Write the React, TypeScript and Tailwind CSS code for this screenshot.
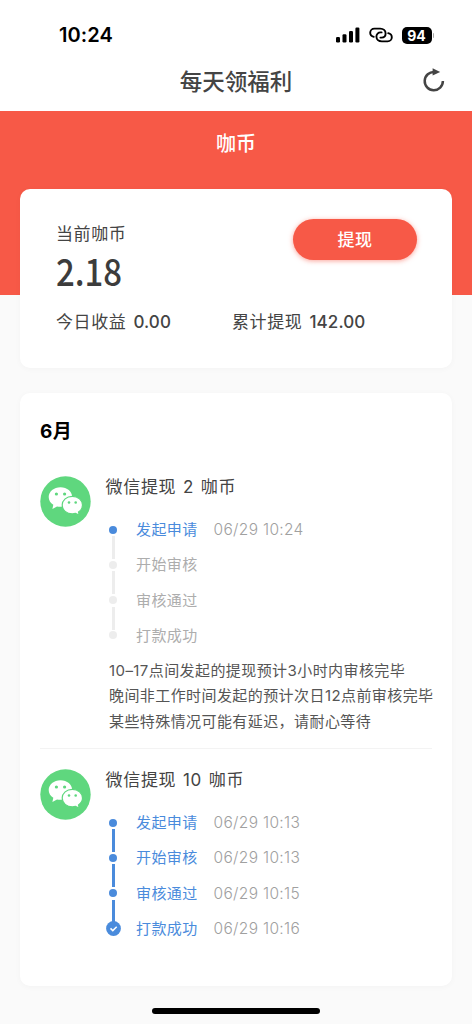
import React from "react";
import { clsx } from "clsx";

type Step = {
  label: string;
  time?: string;
  state: "todo" | "active" | "finished";
};

type WithdrawRecord = {
  title: string;
  steps: Step[];
  notes?: string[];
};

const records: WithdrawRecord[] = [
  {
    title: "微信提现 2 咖币",
    steps: [
      { label: "发起申请", time: "06/29 10:24", state: "active" },
      { label: "开始审核", state: "todo" },
      { label: "审核通过", state: "todo" },
      { label: "打款成功", state: "todo" },
    ],
    notes: [
      "10–17点间发起的提现预计3小时内审核完毕",
      "晚间非工作时间发起的预计次日12点前审核完毕",
      "某些特殊情况可能有延迟，请耐心等待",
    ],
  },
  {
    title: "微信提现 10 咖币",
    steps: [
      { label: "发起申请", time: "06/29 10:13", state: "active" },
      { label: "开始审核", time: "06/29 10:13", state: "active" },
      { label: "审核通过", time: "06/29 10:15", state: "active" },
      { label: "打款成功", time: "06/29 10:16", state: "finished" },
    ],
  },
];

function SignalIcon() {
  return (
    <svg width="24" height="16" viewBox="0 0 24 16" fill="#000">
      <rect x="0" y="10" width="4" height="5.5" rx="1.2" />
      <rect x="6.5" y="7.3" width="4" height="8.2" rx="1.2" />
      <rect x="13" y="4" width="4" height="11.5" rx="1.2" />
      <rect x="19.4" y="0.5" width="4" height="15" rx="1.2" />
    </svg>
  );
}

function LinkIcon() {
  return (
    <svg width="24" height="16" viewBox="0 0 24 16" fill="none" stroke="#000" strokeWidth="1.9" strokeLinecap="round">
      <path d="M4.8 9.9C2.6 9.4 1.2 7.8 1.2 5.8C1.2 3.4 3 1.6 5.4 1.6H11.2C14.4 1.6 16.6 3.6 16.6 6.4C16.6 8.9 14.8 10.6 12.4 10.6H11.4" />
      <path d="M19.2 6.1C21.4 6.6 22.8 8.2 22.8 10.2C22.8 12.6 21 14.4 18.6 14.4H12.8C9.6 14.4 7.4 12.4 7.4 9.6C7.4 7.1 9.2 5.4 11.6 5.4H12.6" />
    </svg>
  );
}

function RefreshIcon() {
  return (
    <svg width="22" height="24" viewBox="0 0 22 24">
      <path d="M11.5 4A9.1 9.1 0 1 0 19.9 13" fill="none" stroke="#444" strokeWidth="2.5" />
      <path d="M9.6 0.2L17.2 4L9.6 7.4Z" fill="#444" />
    </svg>
  );
}

function WechatIcon() {
  return (
    <svg className="shrink-0" width="51" height="51" viewBox="0 0 51 51">
      <circle cx="25.5" cy="25.5" r="25.2" fill="#5fd77e" />
      <path
        d="M20.5 11.2C13.9 11.2 8.7 15.5 8.7 21.1C8.7 24.3 10.4 27 13.3 28.8L12.4 33L17 30.4C18.1 30.7 19.3 30.8 20.5 30.8C27.1 30.8 32.2 26.6 32.2 21.1C32.2 15.5 27.1 11.2 20.5 11.2Z"
        fill="#fff"
      />
      <path
        d="M32.3 20.3C26.6 20.3 22.2 24.2 22.2 29.1C22.2 34 26.6 37.9 32.3 37.9C33.5 37.9 34.6 37.7 35.6 37.4L39.3 39.4L38.5 36C41 34.4 42.5 32 42.5 29.1C42.5 24.2 38 20.3 32.3 20.3Z"
        fill="#fff"
        stroke="#5fd77e"
        strokeWidth="1.2"
      />
      <g fill="#5fd77e">
        <circle cx="16.4" cy="18" r="1.6" />
        <circle cx="24.6" cy="18" r="1.6" />
        <circle cx="29" cy="26.5" r="1.3" />
        <circle cx="35.7" cy="26.5" r="1.3" />
      </g>
    </svg>
  );
}

function StatusBar() {
  return (
    <div className="flex h-[70px] items-center justify-between pr-[38px] pl-[59px]">
      <span className="text-[20px] font-semibold tracking-[0.1px] text-black">10:24</span>
      <div className="flex items-center">
        <SignalIcon />
        <span className="ml-[9px]">
          <LinkIcon />
        </span>
        <div className="ml-[9px] flex h-[17px] w-[30px] items-center justify-center rounded-[5px] bg-black text-[14px] font-bold text-white">
          94
        </div>
        <div className="ml-px h-[5px] w-[1.5px] rounded-r bg-[#aaa]" />
      </div>
    </div>
  );
}

function StepRow({ step, next }: { step: Step; next?: Step }) {
  const todo = step.state === "todo";
  return (
    <div className={clsx("flex items-start", next ? "h-[35.33px]" : "h-[15px]")}>
      <div className="flex w-[15px] shrink-0 flex-col items-center">
        <div className="flex h-[15px] items-center">
          {step.state === "finished" ? (
            <svg width="15" height="15" viewBox="0 0 15 15">
              <circle cx="7.5" cy="7.5" r="7.4" fill="#4a8bdc" />
              <path d="M4.5 7.4L6.8 9.6L10.7 5.7" fill="none" stroke="#fff" strokeWidth="1.5" />
            </svg>
          ) : (
            <div className={clsx("size-[8px] rounded-full", todo ? "bg-[#ededed]" : "bg-[#4a8bdc]")} />
          )}
        </div>
        {next && (
          <div
            className={clsx(
              "-mt-px h-[23px] w-[3px] shrink-0",
              next.state === "todo" ? "bg-[#ededed]" : "bg-[#4a8bdc]"
            )}
          />
        )}
      </div>
      <span
        className={clsx(
          "ml-[15.5px] w-[77.5px] text-[15px] leading-[15px] tracking-[0.4px]",
          todo ? "text-[#adadad]" : "text-[#4a8bdc]"
        )}
      >
        {step.label}
      </span>
      <span className="text-[15.5px] leading-[15px] font-light tracking-[0.33px] text-[#a0a0a0]">{step.time}</span>
    </div>
  );
}

function RecordItem({ record }: { record: WithdrawRecord }) {
  return (
    <div className="flex">
      <WechatIcon />
      <div className="ml-[14.5px]">
        <h3 className="text-[17px] leading-[22px] tracking-[0.7px] text-[#444] [word-spacing:1.2px]">{record.title}</h3>
        <div className="mt-[24px]">
          {record.steps.map((step, i) => (
            <StepRow key={step.label} step={step} next={record.steps[i + 1]} />
          ))}
        </div>
        {record.notes && (
          <div className="mt-[15px] ml-[3.5px] text-[15px] leading-[25.3px] tracking-[0.42px] text-[#555]">
            {record.notes.map((note) => (
              <p key={note}>{note}</p>
            ))}
          </div>
        )}
      </div>
    </div>
  );
}

export default function App() {
  return (
    <div className="h-[1024px] w-[472px] overflow-hidden bg-[#fafafa] font-['Inter','Noto_Sans_CJK_SC',sans-serif] whitespace-nowrap">
      <header className="h-[111px] bg-white">
        <StatusBar />
        <div className="grid h-[22px] grid-cols-[1fr_auto_1fr] items-center">
          <h1 className="col-start-2 mt-px text-[22.5px] leading-[22px] font-medium text-[#444]">每天领福利</h1>
          <div className="-mt-[3px] justify-self-end pr-[27px]">
            <RefreshIcon />
          </div>
        </div>
      </header>

      <div className="h-[184px] bg-[#f75947] pt-[21px] text-center text-[20px] leading-[24px] font-medium text-white">
        咖币
      </div>

      <section className="relative mx-[20px] -mt-[106px] h-[179px] rounded-[10px] bg-white px-[36px] pt-[30px] text-[#444] shadow-[0_1px_6px_rgba(0,0,0,0.03)]">
        <div className="flex justify-between">
          <div>
            <p className="mt-[3px] text-[17px] leading-[24px] tracking-[0.6px]">当前咖币</p>
            <p className="mt-[2px] mb-[3px] origin-left scale-x-[0.89] font-['Noto_Sans_CJK_SC',sans-serif] text-[37px] leading-[44px] font-medium text-[#3c3c3c]">
              2.18
            </p>
          </div>
          <button className="-mr-px h-[41px] w-[124px] rounded-full bg-[#f75947] pt-[2px] text-[17px] font-medium tracking-[0.5px] text-white shadow-[0_1px_5px_rgba(247,89,71,0.55)]">
            提现
          </button>
        </div>
        <div className="mt-[15px] flex text-[17px] leading-[24px]">
          <p className="w-[176px]">
            <span className="tracking-[0.6px]">今日收益</span>
            <span className="ml-[7px] font-medium tracking-[0.1px]">0.00</span>
          </p>
          <p>
            <span className="tracking-[0.6px]">累计提现</span>
            <span className="ml-[7px] font-medium tracking-[0.1px]">142.00</span>
          </p>
        </div>
      </section>

      <section className="mx-[20px] mt-[25px] h-[593px] rounded-[10px] bg-white px-[20px] pt-[27px] shadow-[0_1px_6px_rgba(0,0,0,0.03)]">
        <h2 className="text-[19px] leading-[24px] font-bold tracking-[0.5px] text-black">6月</h2>
        <div className="mt-[32px] h-[273px] border-b border-[#f3f3f3]">
          <RecordItem record={records[0]} />
        </div>
        <div className="pt-[20px]">
          <RecordItem record={records[1]} />
        </div>
      </section>

      <div className="mx-auto mt-[22px] h-[6px] w-[168px] rounded-full bg-black" />
    </div>
  );
}
